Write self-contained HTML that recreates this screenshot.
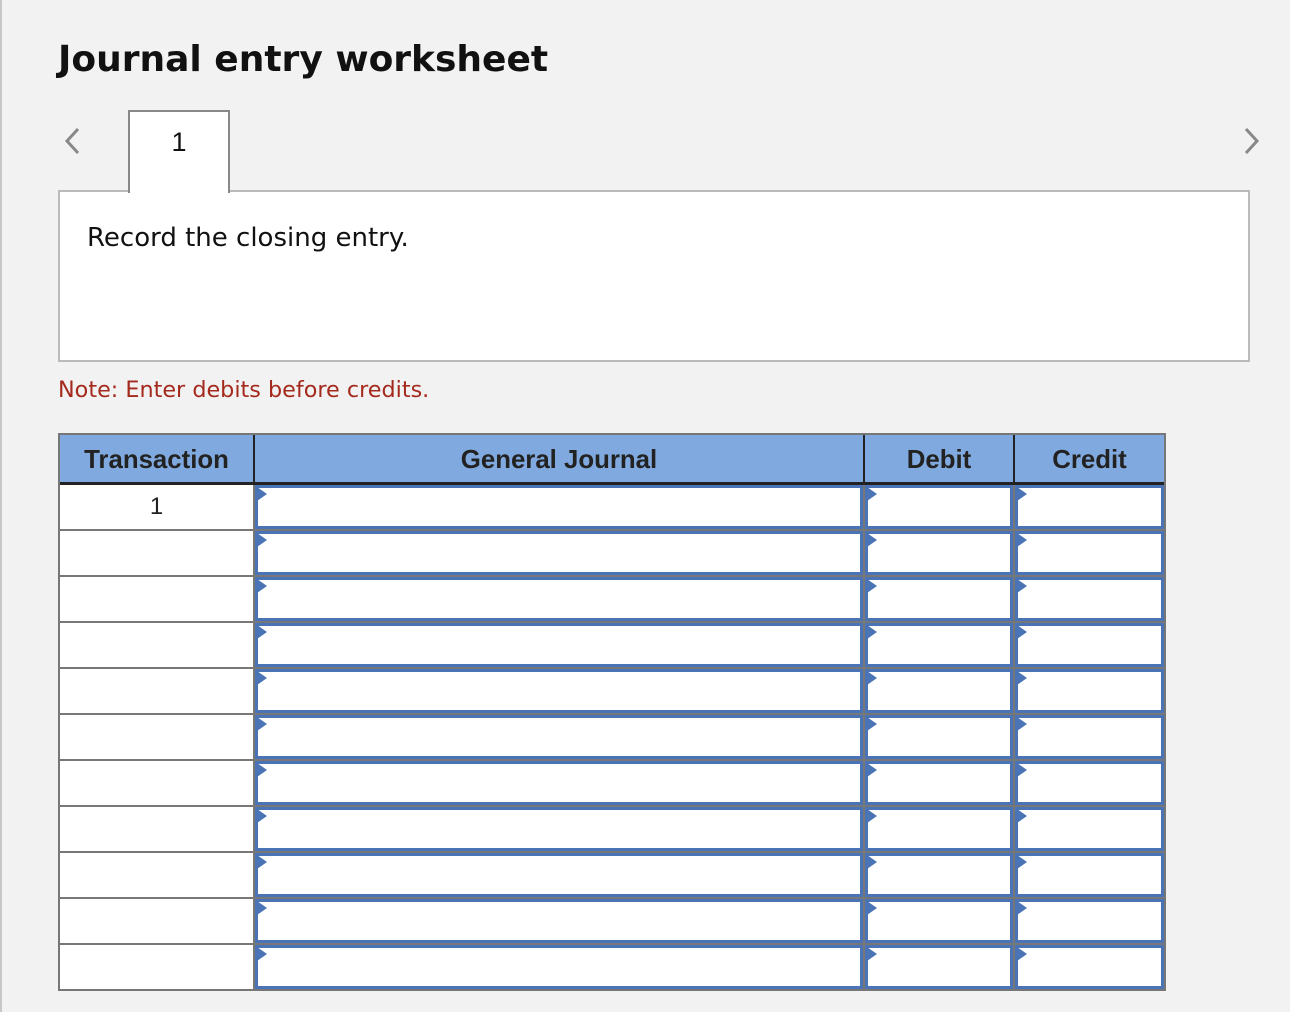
<!DOCTYPE html>
<html><head><meta charset="utf-8"><style>
*{box-sizing:border-box;margin:0;padding:0}
body{width:1290px;height:1012px;background:#f2f2f2;font-family:"Liberation Sans",Arial,sans-serif;position:relative;overflow:hidden}
body:before{content:"";position:absolute;left:0;top:0;bottom:0;width:2px;background:#c8c8c8}
h1{position:absolute;left:58px;top:39px;font-size:36px;font-weight:bold;color:#111;font-family:"DejaVu Sans","Liberation Sans",sans-serif}
.arrow{position:absolute;top:126px;width:16px;height:30px}
.tab{position:absolute;left:128px;top:110px;width:102px;height:83px;background:#fff;border:2px solid #888;border-bottom:none;z-index:2;text-align:center;font-size:27px;padding-top:15px;color:#111}
.panel{position:absolute;left:58px;top:190px;width:1192px;height:172px;background:#fff;border:2px solid #bbb}
.panel p{position:absolute;left:27px;top:31px;color:#111;font-family:"DejaVu Sans","Liberation Sans",sans-serif;font-size:26px}
.note{position:absolute;left:58px;top:377px;font-size:22.3px;color:#a52a1e;font-family:"DejaVu Sans","Liberation Sans",sans-serif}
.tbl{position:absolute;left:58px;top:433px;width:1108px;border:2px solid #777;border-bottom:none;background:#fff}
.hd{display:flex;height:50px;background:#80aadf;border-bottom:3px solid #222}
.hd div{font-weight:bold;font-size:25.8px;color:#222;text-align:center;line-height:50px;border-right:2px solid #222}
.hd div:last-child{border-right:none}
.c1{width:195px}.c2{width:610px}.c3{width:150px}.c4{width:149px}
.row{display:flex;height:46px;border-bottom:2px solid #777}
.row>div{height:44px;border-right:2px solid #777;position:relative}
.row>div:last-child{border-right:none}
.t{text-align:center;font-size:24px;line-height:44px;color:#222}
.in{background:#777;padding:0}
.in i{position:absolute;left:0;top:0;right:0;bottom:0;border:3px solid #4a74b6;background:#fff;display:block}
.in i:before{content:"";position:absolute;left:-1px;top:-1px;border-left:10px solid #4a74b6;border-top:7px solid transparent;border-bottom:7px solid transparent}
</style></head><body>
<h1>Journal entry worksheet</h1>
<svg class="arrow" style="left:64px" viewBox="0 0 16 30"><path d="M14 3 L3 15 L14 27" fill="none" stroke="#888" stroke-width="3"/></svg>
<svg class="arrow" style="left:1244px" viewBox="0 0 16 30"><path d="M2 3 L13 15 L2 27" fill="none" stroke="#888" stroke-width="3"/></svg>
<div class="tab">1</div>
<div class="panel"><p>Record the closing entry.</p></div>
<div class="note">Note: Enter debits before credits.</div>
<div class="tbl">
<div class="hd"><div class="c1">Transaction</div><div class="c2">General Journal</div><div class="c3">Debit</div><div class="c4">Credit</div></div>
<div class="row"><div class="c1 t">1</div><div class="c2 in"><i></i></div><div class="c3 in"><i></i></div><div class="c4 in"><i></i></div></div>
<div class="row"><div class="c1 t"></div><div class="c2 in"><i></i></div><div class="c3 in"><i></i></div><div class="c4 in"><i></i></div></div>
<div class="row"><div class="c1 t"></div><div class="c2 in"><i></i></div><div class="c3 in"><i></i></div><div class="c4 in"><i></i></div></div>
<div class="row"><div class="c1 t"></div><div class="c2 in"><i></i></div><div class="c3 in"><i></i></div><div class="c4 in"><i></i></div></div>
<div class="row"><div class="c1 t"></div><div class="c2 in"><i></i></div><div class="c3 in"><i></i></div><div class="c4 in"><i></i></div></div>
<div class="row"><div class="c1 t"></div><div class="c2 in"><i></i></div><div class="c3 in"><i></i></div><div class="c4 in"><i></i></div></div>
<div class="row"><div class="c1 t"></div><div class="c2 in"><i></i></div><div class="c3 in"><i></i></div><div class="c4 in"><i></i></div></div>
<div class="row"><div class="c1 t"></div><div class="c2 in"><i></i></div><div class="c3 in"><i></i></div><div class="c4 in"><i></i></div></div>
<div class="row"><div class="c1 t"></div><div class="c2 in"><i></i></div><div class="c3 in"><i></i></div><div class="c4 in"><i></i></div></div>
<div class="row"><div class="c1 t"></div><div class="c2 in"><i></i></div><div class="c3 in"><i></i></div><div class="c4 in"><i></i></div></div>
<div class="row"><div class="c1 t"></div><div class="c2 in"><i></i></div><div class="c3 in"><i></i></div><div class="c4 in"><i></i></div></div>
</div>
</body></html>
